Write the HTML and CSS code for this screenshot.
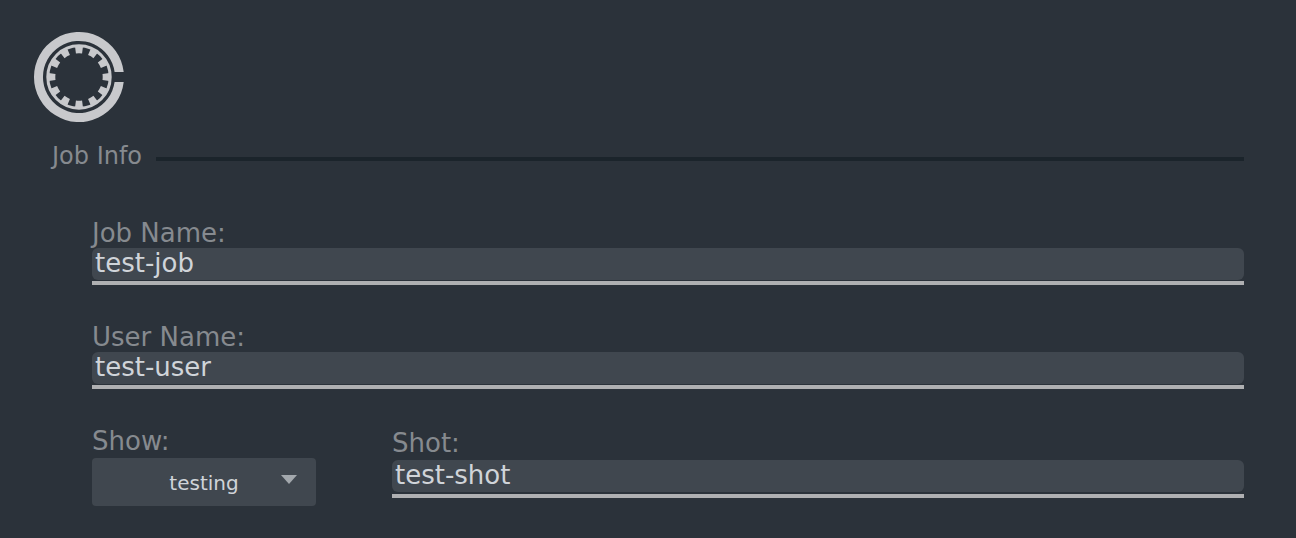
FILE: index.html
```html
<!DOCTYPE html>
<html lang="en">
<head>
<meta charset="utf-8">
<title>Job Info</title>
<link rel="stylesheet" href="styles.css">
</head>
<body>
<form class="panel">
  <svg class="logo" viewBox="-46 -46 92 92" aria-hidden="true">
    <path class="logo-ring" d="M44.7 -5A45 45 0 1 0 44.7 5H35.6A36 36 0 1 1 35.6 -5Z"/>
    <circle class="logo-rim" r="31.2"/>
    <circle class="logo-teeth" r="27.2" pathLength="120"/>
  </svg>
  <header class="section-head">
    <h1 class="section-title">Job Info</h1>
    <span class="rule"></span>
  </header>
  <div class="fields">
    <div class="field">
      <label class="label" for="job">Job Name:</label>
      <div class="underline"><input class="input" id="job" type="text" value="test-job"></div>
    </div>
    <div class="field">
      <label class="label" for="user">User Name:</label>
      <div class="underline"><input class="input" id="user" type="text" value="test-user"></div>
    </div>
    <div class="row">
      <div class="field show">
        <label class="label" for="show">Show:</label>
        <div class="picker">
          <select class="select" id="show"><option>testing</option></select>
          <svg class="arrow" viewBox="0 0 16 9" aria-hidden="true"><path d="M0 0H16L8 9Z"/></svg>
        </div>
      </div>
      <div class="field shot">
        <label class="label" for="shot">Shot:</label>
        <div class="underline"><input class="input" id="shot" type="text" value="test-shot"></div>
      </div>
    </div>
  </div>
</form>
</body>
</html>
```

FILE: styles.css
```css
* {
  box-sizing: border-box;
}

body {
  margin: 0;
  min-height: 100vh;
  background: #2b323a;
  color: #868a8f;
  font-family: "DejaVu Sans", sans-serif;
  font-size: 26px;
  line-height: 30px;
}

.panel {
  padding: 31px 52px 32px;
}

.logo {
  display: block;
  width: 92px;
  height: 92px;
  margin-left: -19px;
  fill: none;
  stroke: #c8c9cc;
}

.logo-ring {
  fill: #c8c9cc;
  stroke: none;
}

.logo-rim {
  stroke-width: 3;
}

.logo-teeth {
  stroke-width: 7;
  stroke-dasharray: 5 5;
  stroke-dashoffset: 2.5;
}

.section-head {
  display: flex;
  align-items: center;
  gap: 14px;
  margin-top: 18px;
}

.section-title {
  margin: 0;
  font-size: 24px;
  font-weight: normal;
}

.rule {
  flex: 1;
  height: 4px;
  margin-top: 6px;
  background: #1b242b;
}

.fields {
  display: flex;
  flex-direction: column;
  gap: 37px;
  margin: 47px 0 0 40px;
}

.field {
  display: flex;
  flex-direction: column;
}

.underline {
  padding-bottom: 1px;
  border-bottom: 4px solid #afb0b2;
}

.input,
.select {
  display: block;
  width: 100%;
  border: 0;
  background: #40474f;
  color: #d0d4d9;
  font: inherit;
  outline: 0;
}

.input {
  height: 32px;
  padding: 0 3px 2px;
  border-radius: 6px;
}

.row {
  display: flex;
  align-items: flex-start;
  gap: 76px;
}

.show,
.shot {
  gap: 2px;
}

.show {
  width: 224px;
}

.shot {
  flex: 1;
  padding-top: 2px;
}

.shot .underline {
  padding-bottom: 2px;
}

.picker {
  position: relative;
}

.select {
  height: 48px;
  padding: 2px 32px 0;
  border-radius: 4px;
  appearance: none;
  font-size: 20px;
  text-align: center;
  text-align-last: center;
}

.arrow {
  position: absolute;
  top: 17px;
  right: 19px;
  width: 16px;
  height: 9px;
  fill: #a3a8ad;
  pointer-events: none;
}
```
